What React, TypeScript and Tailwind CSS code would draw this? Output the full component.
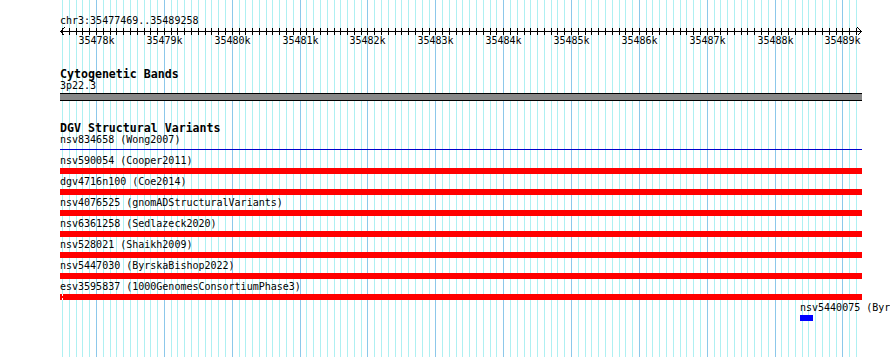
import React from "react";

const START = 35477469;
const px = (pos: number) => Math.round(60 + ((pos - START) * 800) / 11790);

const gridPositions: number[] = [];
for (let p = 35477500; p <= 35489200; p += 100) gridPositions.push(p);

const rows = [
  "nsv590054 (Cooper2011)",
  "dgv4716n100 (Coe2014)",
  "nsv4076525 (gnomADStructuralVariants)",
  "nsv6361258 (Sedlazeck2020)",
  "nsv528021 (Shaikh2009)",
  "nsv5447030 (ByrskaBishop2022)",
  "esv3595837 (1000GenomesConsortiumPhase3)",
];

function Grid() {
  return (
    <svg className="absolute left-0 top-0" width={890} height={357} shapeRendering="crispEdges">
      {gridPositions.map((p) => {
        const x = px(p) + 0.5;
        const major = p % 1000 === 0;
        return (
          <line
            key={p}
            x1={x}
            x2={x}
            y1={0}
            y2={357}
            stroke={major ? "#8cc8ea" : "#aef0f2"}
            strokeWidth={1}
          />
        );
      })}
    </svg>
  );
}

function Ruler() {
  return (
    <svg width={802} height={22} className="block" shapeRendering="crispEdges">
      <line x1={0} x2={801} y1={4.5} y2={4.5} stroke="#000" strokeWidth={1} />
      <polyline points="4.5,0.5 0.5,4.5 4.5,8.5" fill="none" stroke="#000" strokeWidth={1} />
      <polyline points="797.5,0.5 801.5,4.5 797.5,8.5" fill="none" stroke="#000" strokeWidth={1} />
      {gridPositions.map((p) => {
        const x = px(p) - 60 + 0.5;
        return <line key={p} x1={x} x2={x} y1={1} y2={8} stroke="#000" strokeWidth={1} />;
      })}
      {gridPositions
        .filter((p) => p % 1000 === 0)
        .map((p) => (
          <text
            key={p}
            x={px(p) - 60 + 0.5}
            y={17}
            textAnchor="middle"
            className="font-['DejaVu_Sans_Mono',monospace] text-[10px]"
            fill="#000"
          >
            {`${p / 1000}k`}
          </text>
        ))}
    </svg>
  );
}

export default function App() {
  return (
    <div className="relative w-[890px] h-[357px] overflow-hidden bg-white font-['DejaVu_Sans_Mono',monospace] text-[10px] leading-[10px] text-black">
      <Grid />
      <div className="relative flex flex-col pl-[60px] pt-[16px] w-[890px]">
        <div className="h-[10px] whitespace-nowrap">chr3:35477469..35489258</div>
        <div className="mt-[1px]">
          <Ruler />
        </div>
        <div className="mt-[19px] h-[12px] text-[11.6px] leading-[12px] font-bold whitespace-nowrap">
          Cytogenetic Bands
        </div>
        <div className="mt-[1px] h-[10px] whitespace-nowrap">3p22.3</div>
        <div className="mt-[2px] w-[802px] h-[8px] border-y border-black bg-[#888888]" />
        <div className="mt-[21px] h-[12px] text-[11.6px] leading-[12px] font-bold whitespace-nowrap">
          DGV Structural Variants
        </div>
        <div className="mt-[1px] h-[10px] whitespace-nowrap">nsv834658 (Wong2007)</div>
        <div className="mt-[4px] w-[802px] h-px bg-[#0000cc]" />
        <div className="mt-[6px] flex flex-col">
          {rows.map((r, i) => (
            <div key={r} className="flex flex-col">
              <div className="h-[10px] whitespace-nowrap">{r}</div>
              <div className="relative mt-[2px] mb-[3px] w-[802px] h-[6px] bg-[#ff0000]">
                {i === rows.length - 1 && (
                  <>
                    <div className="absolute left-[2px] top-0 w-px h-[2px] bg-white" />
                    <div className="absolute left-[2px] bottom-0 w-px h-[2px] bg-white" />
                  </>
                )}
              </div>
            </div>
          ))}
        </div>
        <div className="ml-[740px] h-[10px] whitespace-nowrap">nsv5440075 (ByrskaBishop2022)</div>
        <div className="ml-[740px] mt-[2px] w-[13px] h-[6px] bg-[#0000ff]" />
      </div>
    </div>
  );
}
